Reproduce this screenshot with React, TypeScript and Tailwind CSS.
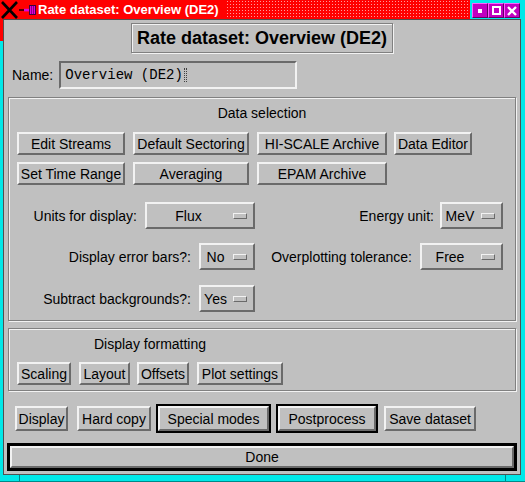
import React from "react";

const raised =
  "border-2 border-t-[#f2f2f2] border-l-[#f2f2f2] border-b-[#6a6a6a] border-r-[#6a6a6a]";
const sunken =
  "border-2 border-t-[#6a6a6a] border-l-[#6a6a6a] border-b-[#f2f2f2] border-r-[#f2f2f2]";
const etched =
  "border border-[#808080] shadow-[inset_1px_1px_0_#f2f2f2,1px_1px_0_#f2f2f2]";

function Btn({ label, className }: { label: string; className: string }) {
  return (
    <div
      className={`${raised} bg-[#c0c0c0] flex items-center justify-center text-[14px] leading-4 text-black whitespace-nowrap ${className}`}
    >
      {label}
    </div>
  );
}

function Drop({ value, className }: { value: string; className: string }) {
  return (
    <div className={`${raised} h-[27px] flex items-center bg-[#c0c0c0] ${className}`}>
      <span className="flex-1 text-center leading-4">{value}</span>
      <span className="w-[14px] h-[6px] border border-t-[#f2f2f2] border-l-[#f2f2f2] border-b-[#6a6a6a] border-r-[#6a6a6a] mr-[6px] ml-[3px]" />
    </div>
  );
}

function Dots() {
  return (
    <svg width="243" height="19" className="block">
      <defs>
        <pattern id="dots" width="3" height="3" patternUnits="userSpaceOnUse">
          <rect x="1" y="1" width="1" height="1" fill="#ff9a9a" />
        </pattern>
      </defs>
      <rect x="0" y="0" width="243" height="19" fill="url(#dots)" />
    </svg>
  );
}

function TitleButton({ kind }: { kind: "min" | "max" | "close" }) {
  return (
    <div className="w-[16px] h-[15px] bg-[#c000c0] border border-t-[#ff60ff] border-l-[#ff60ff] border-b-[#600060] border-r-[#600060] flex items-center justify-center">
      {kind === "min" && <div className="w-[4px] h-[4px] bg-white" />}
      {kind === "max" && <div className="w-[9px] h-[9px] border-2 border-white" />}
      {kind === "close" && (
        <svg width="10" height="10" viewBox="0 0 10 10">
          <path d="M1 1 L9 9 M9 1 L1 9" stroke="white" strokeWidth="2.4" />
        </svg>
      )}
    </div>
  );
}

export default function App() {
  return (
    <div className="w-[525px] h-[482px] bg-[#00e8e8] flex flex-col font-['Liberation_Sans',Arial,sans-serif] text-[14px] text-black overflow-hidden">
      {/* Title bar */}
      <div className="h-[19px] flex shrink-0">
        <div className="flex-1 bg-[#ff0000] flex items-center">
          <svg width="37" height="19" viewBox="0 0 37 19" className="block shrink-0">
            <path d="M2 2 L17 18 M17 2 L2 18" stroke="black" strokeWidth="2.6" />
            <path d="M19 10 L25 10" stroke="black" strokeWidth="1.4" />
            <rect x="24" y="8.8" width="6" height="2.6" fill="#e000e0" />
            <rect x="29.5" y="5.5" width="6" height="9" fill="#e000e0" stroke="#400040" strokeWidth="1" />
            <path d="M31.5 6 L31.5 14 M33.5 6 L33.5 14" stroke="#700070" strokeWidth="0.8" />
          </svg>
          <span className="ml-[1px] text-white font-bold text-[13px] leading-[19px] whitespace-nowrap">
            Rate dataset: Overview (DE2)
          </span>
          <div className="ml-[7px]">
            <Dots />
          </div>
        </div>
        <div className="w-[55px] bg-[#00e8e8] flex items-start pt-[3px] pl-[2px] gap-0">
          <TitleButton kind="min" />
          <TitleButton kind="max" />
          <TitleButton kind="close" />
        </div>
      </div>

      {/* Body */}
      <div className="flex-1 flex min-h-0">
        <div className="w-[3px] flex flex-col">
          <div className="h-[22px] bg-[#ff0000]" />
          <div className="flex-1 bg-[#00e8e8]" />
        </div>
        <div className="flex-1 bg-[#c0c0c0] border border-[#505050] flex flex-col">
          {/* Title box */}
          <div className={`${etched} self-center mt-[3px] h-[30px] px-[5px] flex items-center`}>
            <span className="font-bold text-[18px] leading-5 whitespace-nowrap">
              Rate dataset: Overview (DE2)
            </span>
          </div>

          {/* Name row */}
          <div className="flex items-center mt-[8px] h-[28px] pl-[8px]">
            <span className="leading-4">Name:</span>
            <div className={`${sunken} ml-[6px] w-[238px] h-[28px] flex items-center pl-[4px]`}>
              <span className="font-['Liberation_Mono',monospace] text-[14px] leading-4">Overview (DE2)</span>
              <span className="ml-[1px] w-[3px] h-[14px] border-x border-dotted border-[#404040] self-center" />
            </div>
          </div>

          {/* Data selection */}
          <div className={`${etched} mx-[4px] mt-[8px] flex flex-col pb-[8px]`}>
            <div className="pt-[7px] text-center leading-4">Data selection</div>
            <div className="flex gap-[8px] pl-[8px] mt-[11px]">
              <Btn label="Edit Streams" className="w-[108px] h-[23px]" />
              <Btn label="Default Sectoring" className="w-[116px] h-[23px]" />
              <Btn label="HI-SCALE Archive" className="w-[130px] h-[23px]" />
              <Btn label="Data Editor" className="w-[78px] h-[23px] -ml-[1px]" />
            </div>
            <div className="flex gap-[8px] pl-[8px] mt-[7px]">
              <Btn label="Set Time Range" className="w-[108px] h-[23px]" />
              <Btn label="Averaging" className="w-[116px] h-[23px]" />
              <Btn label="EPAM Archive" className="w-[130px] h-[23px]" />
            </div>

            <div className="flex mt-[17px] h-[27px]">
              <div className="w-[246px] flex justify-end items-center gap-[8px]">
                <span className="leading-4">Units for display:</span>
                <Drop value="Flux" className="w-[110px]" />
              </div>
              <div className="flex-1 flex justify-end items-center gap-[6px] pr-[12px]">
                <span className="leading-4">Energy unit:</span>
                <Drop value="MeV" className="w-[63px]" />
              </div>
            </div>

            <div className="flex mt-[14px] h-[27px]">
              <div className="w-[246px] flex justify-end items-center gap-[8px]">
                <span className="leading-4">Display error bars?:</span>
                <Drop value="No" className="w-[56px]" />
              </div>
              <div className="flex-1 flex justify-end items-center gap-[8px] pr-[12px]">
                <span className="leading-4">Overplotting tolerance:</span>
                <Drop value="Free" className="w-[83px]" />
              </div>
            </div>

            <div className="flex mt-[15px] h-[27px]">
              <div className="w-[246px] flex justify-end items-center gap-[8px]">
                <span className="leading-4">Subtract backgrounds?:</span>
                <Drop value="Yes" className="w-[56px]" />
              </div>
            </div>
          </div>

          {/* Display formatting */}
          <div className={`${etched} mx-[4px] mt-[7px] flex flex-col pb-[5px]`}>
            <div className="pt-[7px] pl-[85px] leading-4">Display formatting</div>
            <div className="flex pl-[8px] mt-[10px]">
              <Btn label="Scaling" className="w-[54px] h-[23px]" />
              <Btn label="Layout" className="w-[51px] h-[23px] ml-[8px]" />
              <Btn label="Offsets" className="w-[52px] h-[23px] ml-[7px]" />
              <Btn label="Plot settings" className="w-[86px] h-[23px] ml-[8px]" />
            </div>
          </div>

          {/* Bottom buttons */}
          <div className="flex items-center mt-[13px] h-[29px] pl-[11px]">
            <Btn label="Display" className="w-[53px] h-[25px]" />
            <Btn label="Hard copy" className="w-[74px] h-[25px] ml-[9px]" />
            <div className="ml-[5px] w-[115px] h-[29px] border-2 border-black flex">
              <Btn label="Special modes" className="flex-1" />
            </div>
            <div className="ml-[5px] w-[102px] h-[29px] border-2 border-black flex">
              <Btn label="Postprocess" className="flex-1" />
            </div>
            <Btn label="Save dataset" className="w-[92px] h-[25px] ml-[6px]" />
          </div>

          {/* Done */}
          <div className="mx-[3px] mt-[10px] h-[28px] border-[3px] border-black flex">
            <Btn label="Done" className="flex-1" />
          </div>
        </div>
        <div className="w-[4px] bg-[#00e8e8]" />
      </div>

      {/* Bottom frame */}
      <div className="h-[7px] shrink-0 bg-[#00e8e8] border-b border-[#008888] flex">
        <div className="w-[20px] border-r border-[#008888]" />
        <div className="flex-1" />
        <div className="w-[20px] border-l border-[#008888]" />
      </div>
    </div>
  );
}
